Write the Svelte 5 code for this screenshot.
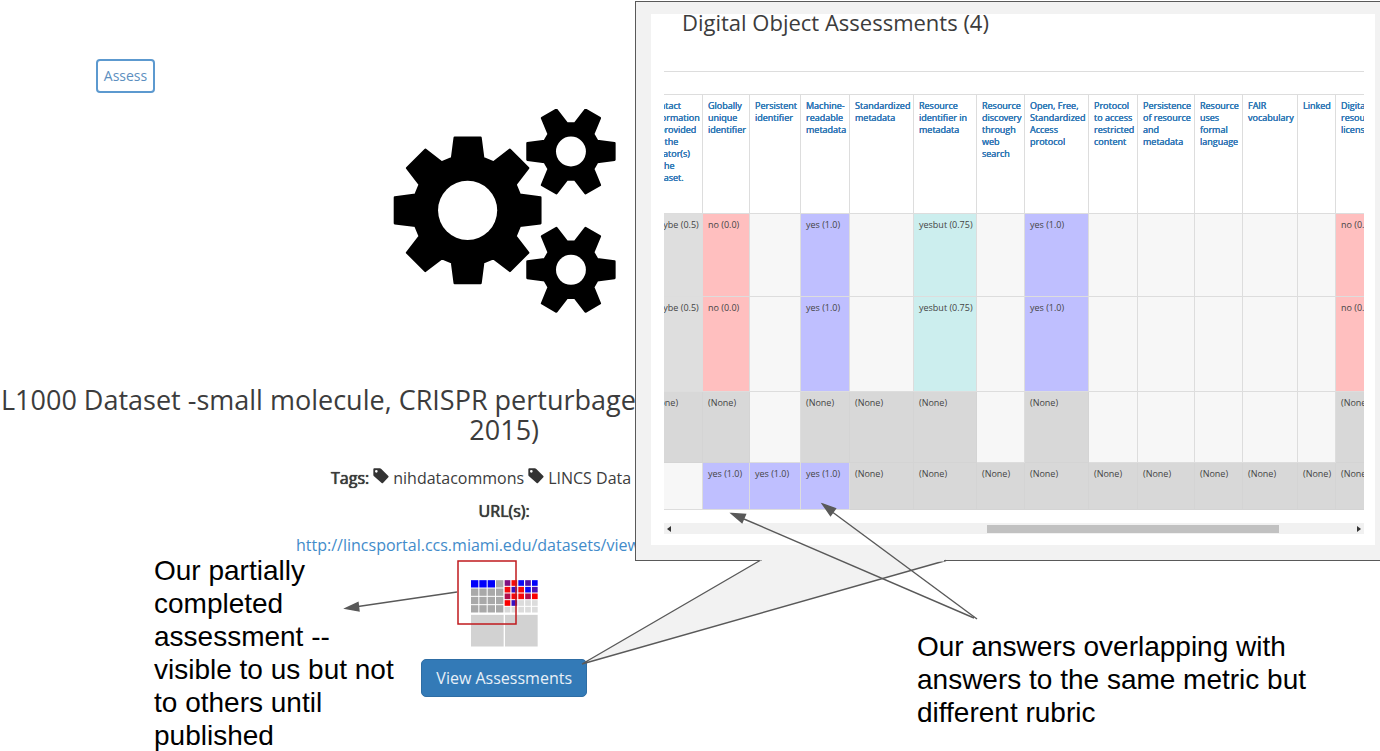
<script>
  const headers = [
    ['contact', 'information', 'is provided', 'for the', 'creator(s)', 'of the', 'dataset.'],
    ['Globally', 'unique', 'identifier'],
    ['Persistent', 'identifier'],
    ['Machine-', 'readable', 'metadata'],
    ['Standardized', 'metadata'],
    ['Resource', 'identifier in', 'metadata'],
    ['Resource', 'discovery', 'through', 'web', 'search'],
    ['Open, Free,', 'Standardized', 'Access', 'protocol'],
    ['Protocol', 'to access', 'restricted', 'content'],
    ['Persistence', 'of resource', 'and', 'metadata'],
    ['Resource', 'uses', 'formal', 'language'],
    ['FAIR', 'vocabulary'],
    ['Linked'],
    ['Digital', 'resource', 'license']
  ];
  const widths = [58, 47, 51, 49, 64, 63, 48, 64, 49, 57, 48, 55, 38, 58];

  const N = '(None)';
  const Y = 'yes (1.0)';
  const B = 'yesbut (0.75)';
  const X = 'no (0.0)';
  const M = 'maybe (0.5)';
  const rows = [
    { height: 83, cells: [M, X, '', Y, '', B, '', Y, '', '', '', '', '', X] },
    { height: 95, cells: [M, X, '', Y, '', B, '', Y, '', '', '', '', '', X] },
    { height: 71, cells: [N, N, '', N, N, N, '', N, '', '', '', '', '', N] },
    { height: 47, cells: ['', Y, Y, Y, N, N, N, N, N, N, N, N, N, N] }
  ];
  const kinds = { [N]: 'none', [Y]: 'yes', [B]: 'yesbut', [X]: 'no', [M]: 'maybe' };

  function gear(tooth, count) {
    const points = [];
    for (let i = 0; i < count; i++) {
      const a = (i * 2 * Math.PI) / count;
      for (const [x, y] of tooth) {
        points.push(
          `${(x * Math.cos(a) - y * Math.sin(a)).toFixed(1)},${(x * Math.sin(a) + y * Math.cos(a)).toFixed(1)}`
        );
      }
    }
    return points.join(' ');
  }
  const bigGear = gear([[-47, -157], [-39, -219], [39, -219], [47, -157]], 8);
  const smallGear = gear([[79, -32], [131, -25], [131, 25], [79, 32]], 6);

  const leftCells = Array.from({ length: 16 }, (_, i) => ({
    x: (i % 4) * 25,
    y: Math.floor(i / 4) * 25,
    fill: i < 3 ? '#0000fa' : '#a9a9a9'
  }));
  const rightColors = [
    '#80107f', '#f50a0a', '#0a0af5', '#5010a8', '#0000fa',
    '#f50a0a', '#3a10c0', '#f50a0a', '#0a0af5', '#4a10b4',
    '#b00c4c', '#f50a0a', '#f50a0a', '#b00c4c', '#fa0000',
    '#fa0000', '#3a10c0', '#dcdcdc', '#dcdcdc', '#dcdcdc',
    '#d8d8d8', '#dcdcdc', '#dcdcdc', '#dcdcdc', '#dcdcdc'
  ];
  const rightCells = rightColors.map((fill, i) => ({
    x: 101 + (i % 5) * 20.5,
    y: Math.floor(i / 5) * 20,
    fill
  }));
</script>

{#snippet tag()}
  <svg class="tag" viewBox="0 0 48 48" aria-hidden="true">
    <path
      fill="#333" fill-rule="evenodd"
      d="M4 1h16q3 0 5 2l21 21q2 2 0 4L30 45q-2 2-4 0L3 25q-2-2-2-5V4q0-3 3-3zM10 6a4 4 0 1 0 0 8 4 4 0 0 0 0-8z"
    />
  </svg>
{/snippet}

<div class="stage">
  <main>
    <div class="toolbar"><button class="assess" type="button">Assess</button></div>

    <svg class="gears" viewBox="39 26 670 614" aria-hidden="true">
      <g stroke="#000" stroke-width="7" stroke-linejoin="round">
        <polygon points={bigGear} transform="translate(263 331)" />
        <polygon points={smallGear} transform="translate(574 154)" />
        <polygon points={smallGear} transform="translate(574 510)" />
      </g>
      <g fill="#fff">
        <circle cx="263" cy="331" r="89" />
        <circle cx="574" cy="154" r="45" />
        <circle cx="574" cy="510" r="45" />
      </g>
    </svg>

    <h1><span class="first">L1000 Dataset -small molecule, CRISPR perturbage</span><span>2015)</span></h1>

    <p class="tags"><b>Tags:</b>{@render tag()}<span>nihdatacommons</span>{@render tag()}<span>LINCS Data</span></p>
    <p class="urls"><b>URL(s):</b></p>
    <p class="link"><a href="#view">http://lincsportal.ccs.miami.edu/datasets/view</a></p>

    <svg class="insignia" viewBox="0 0 201 200" aria-hidden="true">
      {#each leftCells as c}
        <rect x={c.x} y={c.y} width="22" height="22" fill={c.fill} />
      {/each}
      {#each rightCells as c}
        <rect x={c.x} y={c.y} width="17" height="17" fill={c.fill} />
      {/each}
      <rect x="0" y="104" width="98" height="95" fill="#d2d2d2" />
      <rect x="102" y="104" width="98" height="95" fill="#d2d2d2" />
    </svg>

    <button class="view" type="button">View Assessments</button>
  </main>

  <section class="callout">
    <div class="panel">
      <h2>Digital Object Assessments (4)</h2>
      <div class="scroller">
        <table>
          <colgroup>
            {#each widths as w}<col style="width: {w}px" />{/each}
          </colgroup>
          <thead>
            <tr>
              {#each headers as lines}
                <th scope="col">
                  {#each lines as line, i}{#if i}<br />{/if}{line}{/each}
                </th>
              {/each}
            </tr>
          </thead>
          <tbody>
            {#each rows as row}
              <tr style="height: {row.height}px">
                {#each row.cells as cell}
                  <td class={kinds[cell] ?? 'empty'}>{cell}</td>
                {/each}
              </tr>
            {/each}
          </tbody>
        </table>
      </div>
      <div class="scrollbar">
        <svg viewBox="0 0 4 6" aria-hidden="true"><path d="M4 0v6L0 3z" fill="#333" /></svg>
        <div class="track"><div class="thumb"></div></div>
        <svg viewBox="0 0 4 6" aria-hidden="true"><path d="M0 0v6l4-3z" fill="#333" /></svg>
      </div>
    </div>
  </section>

  <svg class="marks" width="1380" height="751" viewBox="0 0 1380 751" aria-hidden="true">
    <path d="M760 560.500L582 664L946 560.500" fill="#f2f2f2" stroke="#595959" stroke-width="1.4" />
    <path d="M762 559.500H944" stroke="#f2f2f2" stroke-width="4" />
    <rect x="458" y="561" width="58" height="63" fill="none" stroke="#c01a1e" stroke-width="1.5" />
    <g stroke="#595959" stroke-width="1.4" fill="#595959">
      <path d="M457 592L358 606.500" />
      <path d="M345.500 608.500L358 602.500L359 611z" />
      <path d="M974 618L744 519" />
      <path d="M731.500 513.500L745.500 514.500L742 522.500z" />
      <path d="M977 619L833 512.500" />
      <path d="M822.500 504L835.500 508.500L830.500 515.500z" />
    </g>
  </svg>

  <p class="note partial">Our partially<br />completed<br />assessment --<br />visible to us but not<br />to others until<br />published</p>
  <p class="note overlap">Our answers overlapping with<br />answers to the same metric but<br />different rubric</p>
</div>

<style>
  :global(body) {
    margin: 0;
    background: #fff;
  }
  .stage {
    position: relative;
    min-height: 751px;
    overflow: hidden;
    font-family: 'Open Sans', 'Noto Sans', sans-serif;
    font-size: 16px;
    color: #3c3c3c;
  }
  h1, h2, p {
    margin: 0;
    font-weight: 400;
  }
  button {
    font-family: inherit;
    cursor: pointer;
  }
  main {
    box-sizing: border-box;
    width: 73%;
    padding-left: 1px;
    display: flex;
    flex-direction: column;
    align-items: center;
  }
  .toolbar {
    align-self: stretch;
    padding: 59px 95px 16px;
  }
  .assess {
    display: block;
    box-sizing: border-box;
    width: 59px;
    height: 34px;
    padding: 0 0 2px;
    border: 2px solid #5c99cf;
    border-radius: 4px;
    background: #fff;
    color: #5c8fc0;
    font-size: 14px;
  }
  .gears {
    width: 223px;
    height: 204px;
  }
  h1 {
    align-self: stretch;
    display: flex;
    flex-direction: column;
    align-items: center;
    margin-top: 72px;
    font-size: 27px;
    line-height: 30px;
  }
  .first {
    align-self: flex-start;
    white-space: nowrap;
  }
  b {
    font-weight: 400;
    text-shadow: 0 0 1px #333, 0 0 0 #333;
  }
  .tags {
    align-self: flex-start;
    display: flex;
    gap: 4px;
    margin: 21px 0 0 330px;
    line-height: 24px;
    white-space: nowrap;
  }
  .tag {
    width: 16px;
    height: 16px;
    margin-top: 2px;
  }
  .urls {
    margin-top: 9px;
    line-height: 24px;
  }
  .link {
    align-self: flex-start;
    margin: 10px 0 0 295px;
    line-height: 24px;
  }
  a {
    color: #428bca;
    text-decoration: none;
  }
  .insignia {
    width: 67px;
    height: 67px;
    margin-top: 23px;
  }
  .view {
    height: 38px;
    margin-top: 12px;
    padding: 0 14px;
    border: 1px solid #2e6da4;
    border-radius: 5px;
    background: #337ab7;
    color: #e8f0f7;
    font-size: 16px;
  }
  .callout {
    position: absolute;
    top: 1px;
    left: 635px;
    right: -8px;
    box-sizing: border-box;
    padding: 12px 12px 15px 15px;
    border: 1px solid #595959;
    background: #f2f2f2;
  }
  .panel {
    padding: 0 11px 11px 13px;
    background: #fff;
  }
  h2 {
    padding: 0 0 41px 18px;
    font-size: 22px;
    line-height: 16px;
  }
  .scroller {
    overflow: hidden;
    border-top: 1px solid #ddd;
    padding-top: 22px;
  }
  table {
    width: 749px;
    margin-left: -20px;
    table-layout: fixed;
    border-collapse: collapse;
    font-size: 9px;
    line-height: 12px;
  }
  thead tr {
    height: 119px;
  }
  th, td {
    box-sizing: border-box;
    padding: 5px 0 0 5px;
    border: 1px solid #ddd;
    text-align: left;
    vertical-align: top;
    font-weight: 400;
    white-space: nowrap;
  }
  th {
    color: #337ab7;
    text-shadow: 0 0 0 #337ab7, 0 0 0 #337ab7;
  }
  td {
    color: #444;
  }
  .empty { background: #f7f7f7; }
  .none { background: #d8d8d8; border-color: #d4d4d4; }
  .maybe { background: #dedede; }
  .yes { background: #bfbfff; }
  .no { background: #ffbfbf; }
  .yesbut { background: #cceeee; }
  .scrollbar {
    display: flex;
    align-items: center;
    gap: 3px;
    height: 11px;
    margin-top: 13px;
    padding: 0 3px;
    background: #f1f1f1;
  }
  .scrollbar svg {
    width: 4px;
    height: 6px;
  }
  .track {
    flex: 1;
    height: 8px;
  }
  .thumb {
    width: 43%;
    height: 100%;
    margin-left: 46%;
    background: #c1c1c1;
  }
  .marks {
    position: absolute;
    top: 0;
    left: 0;
    pointer-events: none;
  }
  .note {
    position: absolute;
    color: #000;
    font-family: 'Liberation Sans', Arial, sans-serif;
    font-size: 28px;
    line-height: 33px;
    white-space: nowrap;
  }
  .partial {
    top: 554px;
    left: 154px;
  }
  .overlap {
    top: 630px;
    left: 917px;
  }
</style>
